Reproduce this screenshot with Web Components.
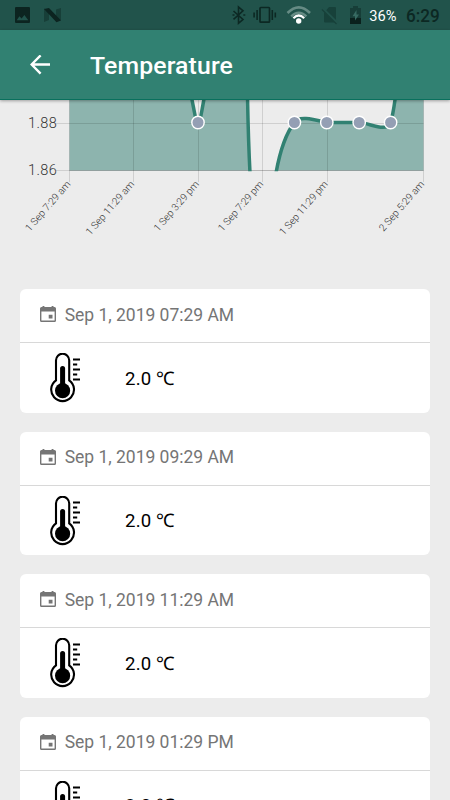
<!DOCTYPE html>
<html lang="en">
<head>
<meta charset="utf-8">
<title>Temperature</title>
<style>
html,body{margin:0;height:800px;overflow:hidden;background:#ececec;font-family:Roboto,"Liberation Sans",sans-serif}
</style>
</head>
<body>
<temperature-screen></temperature-screen>
<script>
function define(name, markup) {
  const template = document.createElement('template');
  template.innerHTML = markup;
  customElements.define(name, class extends HTMLElement {
    constructor() {
      super();
      this.attachShadow({mode: 'open'}).append(template.content.cloneNode(true));
    }
  });
}

define('status-bar', `
<style>
:host{display:flex;height:30px;background:#21534b;color:#0c2823}
svg{display:block;width:450px;height:30px}
</style>
<svg viewBox="0 0 450 30">
  <path fill="#0c2420" fill-rule="evenodd" d="M16 7H29Q30 7 30 8V22Q30 23 29 23H16Q15 23 15 22V8Q15 7 16 7ZM16.7 20.3H28.3L24.4 15 21.6 18.6 19.4 16.3Z"/>
  <path fill="#173f38" d="M44 8.5 49 11V20L44 22ZM56 9.5 61 8V20.5L56 18Z"/>
  <path fill="#0c2420" d="M44 9 49 8 61 20.5 56.5 22.3Z"/>
  <path d="M233.5 11 243 19.5 238.5 23.2V7L243 10.8 233.5 19.3" fill="none" stroke="#0c2823" stroke-width="1.6"/>
  <path d="M232.5 15h2M243.3 15h2" stroke="#0c2823" stroke-width="1.5"/>
  <rect x="260" y="7.5" width="9.5" height="14.7" rx=".8" fill="none" stroke="#0c2823" stroke-width="1.7"/>
  <path d="M257.1 10v10M254.1 12.5v5M272.3 10v10M275.3 12.5v5" stroke="#0c2823" stroke-width="1.6"/>
  <g fill="none">
    <path d="M287.5 13Q298.8 1.8 310 13" stroke="#668b84" stroke-width="2.6"/>
    <path d="M291.2 16.4Q298.8 9.2 306.4 16.4" stroke="#668b84" stroke-width="2.4"/>
    <path d="M293.4 18.2Q298.8 12.8 304.2 18.2" stroke="#fff" stroke-width="2.2"/>
  </g>
  <circle cx="298.7" cy="21" r="2.7" fill="#fff"/>
  <path d="M324 13 329 7H335Q336 7 336 8V22.5H325Q324 22.5 324 21.5Z" fill="#17413a"/>
  <path d="M322.5 8.5 337.2 23" stroke="#21534b" stroke-width="2.7"/><path d="M322 9.5 336.5 24" stroke="#17413a" stroke-width="1.3"/>
  <path d="M350 8h3V6h5v2h3v11h-11Z" fill="#173e38"/><path d="M350 18h11v6h-11Z" fill="#0a211d"/>
  <path d="M356.5 10 352.5 16.3H355V20.5L359 14.5H356.5Z" fill="#376b62"/>
  <text x="369.3" y="21" font-size="15" fill="#fff" textLength="27.2" lengthAdjust="spacingAndGlyphs">36%</text>
  <text x="406" y="21.6" font-size="18" font-weight="500" fill="#0c2823" textLength="33.7" lengthAdjust="spacingAndGlyphs">6:29</text>
</svg>`);

define('app-bar', `
<style>
:host{display:flex;align-items:center;box-sizing:border-box;height:70px;padding-left:30px;gap:40px;background:#318172;border-bottom:1px solid #09705d;box-shadow:0 1px 3px #0005;position:relative;z-index:1;color:#fff}
svg{width:20px;height:20px;flex:none}
h1{margin:2px 0 0;font-size:24.8px;line-height:32px;font-weight:500;letter-spacing:.12px}
</style>
<svg viewBox="0 0 20 20" fill="none" stroke="#fff" stroke-width="2.4"><path d="M20 9.5H2M10.6 .4 1.6 9.5l9 9.1"/></svg>
<h1><slot></slot></h1>`);

define('temperature-chart', `
<style>
:host{display:block;height:189.2px}
svg{display:block;width:450px;height:189px}
</style>
<svg viewBox="0 100 450 189">
  <defs><clipPath id="plot"><rect x="68" y="100" width="357" height="71.3"/></clipPath></defs>
  <g clip-path="url(#plot)">
    <path fill="#8db4ae" d="M69.5 96H191.5C194 109 196 123 198 123S202 110 204.5 96H247.5Q248.5 140 250 170.5H69.5Z"/>
    <path fill="#8db4ae" d="M276 170.5C280 151 287 132 294.3 122.6C299 115 314 119.5 326.8 122.6H359.3C370 123 386 133 390.5 122.6C393 115 394 108 395.5 96H423.5V170.5Z"/>
  </g>
  <g stroke="#000" stroke-opacity=".12" stroke-width="1">
    <path d="M56 123.5H423.5M56 170.5H423.5M69.5 100V182M133.5 100V182M198.5 100V182M262.5 100V182M327.5 100V182M423.5 100V182"/>
    <path d="M69.5 170.5H423.5"/>
  </g>
  <g clip-path="url(#plot)" fill="none" stroke="#318172" stroke-width="3.5">
    <path d="M191.2 96C194 109 196 123 198 123S202 110 204.5 96M247.5 96Q248.3 140 250 173M276 173C280 151 287 132 294.3 122.6C299 115 314 119.5 326.8 122.6H359.3C370 123 386 133 390.5 122.6C393 115 394 108 395.5 96"/>
  </g>
  <g fill="#949fb4" stroke="#fff" stroke-width="1.4">
    <circle cx="198" cy="122.5" r="6.2"/><circle cx="294.4" cy="122.5" r="6.2"/><circle cx="326.8" cy="122.5" r="6.2"/><circle cx="359.2" cy="122.5" r="6.2"/><circle cx="390.6" cy="122.5" r="6.2"/>
  </g>
  <g fill="#333" font-size="14.5" font-weight="300">
    <text x="28" y="127.7" textLength="28.7">1.88</text><text x="28" y="175.4" textLength="28.7">1.86</text>
  </g>
  <g fill="#333" font-size="10" font-weight="300" text-anchor="end">
    <text transform="translate(71 184.5) rotate(-49)" textLength="63">1 Sep 7:29 am</text>
    <text transform="translate(134.8 184.5) rotate(-49)" textLength="68">1 Sep 11:29 am</text>
    <text transform="translate(199.5 184.5) rotate(-49)" textLength="63">1 Sep 3:29 pm</text>
    <text transform="translate(263.8 184.5) rotate(-49)" textLength="63">1 Sep 7:29 pm</text>
    <text transform="translate(328.4 184.5) rotate(-49)" textLength="68">1 Sep 11:29 pm</text>
    <text transform="translate(424.8 184.5) rotate(-49)" textLength="63">2 Sep 5:29 am</text>
  </g>
</svg>`);

define('calendar-icon', `
<style>:host{display:block;width:16px;height:16px}svg{display:block}</style>
<svg width="16" height="16" viewBox="0 0 16 16"><path fill="#757575" fill-rule="evenodd" d="M2.5 0H4.4V1H11.6V0H13.5V1H14.5Q16 1 16 2.5V14.5Q16 16 14.5 16H1.5Q0 16 0 14.5V2.5Q0 1 1.5 1H2.5ZM1.4 5.4V14.6H14.6V5.4ZM8.7 8.8H12.5V12.6H8.7Z"/></svg>`);

define('thermometer-icon', `
<style>:host{display:block;width:31px;height:51px}svg{display:block}</style>
<svg width="31" height="51" viewBox="0 0 31 51">
  <path d="M6 27.4V7.3A6.6 6.6 0 0 1 19.2 7.3V27.4A11.4 11.4 0 1 1 6 27.4Z" fill="none" stroke="#000" stroke-width="2.1"/>
  <circle cx="12.6" cy="37.7" r="7.6"/><path d="M12.6 38V15.6" stroke="#000" stroke-width="5" stroke-linecap="round"/>
  <path d="M23 6.5H30M23 11.5H27.2M23 16.5H30M23 21.5H27.2M23 26.5H30" stroke="#000" stroke-width="2"/>
</svg>`);

define('reading-card', `
<style>
:host{display:flex;flex-direction:column;flex:none;height:123.5px;border-radius:6px;background:#fff;overflow:hidden}
header{display:flex;align-items:center;gap:9.2px;box-sizing:border-box;height:54px;padding:0 0 3px 19.5px;border-bottom:1.5px solid #d8d8d8;color:#757575;font-size:17.5px;letter-spacing:-.02px}
header span{line-height:24px;white-space:nowrap;margin-top:1px}
.body{display:flex;align-items:center;flex:1;padding:1.6px 0 0 30px;gap:44px;font-size:18.6px;color:#000}
.value{line-height:22px;white-space:nowrap;letter-spacing:.2px}
</style>
<header><calendar-icon></calendar-icon><span><slot name="date"></slot></span></header>
<div class="body"><thermometer-icon></thermometer-icon><span class="value"><slot></slot></span></div>`);

define('temperature-screen', `
<style>
:host{display:block;width:450px;height:800px;overflow:hidden;background:#ececec}
main{display:flex;flex-direction:column;gap:19px;padding:0 20px}
</style>
<status-bar></status-bar>
<app-bar>Temperature</app-bar>
<temperature-chart></temperature-chart>
<main>
  <reading-card><span slot="date">Sep 1, 2019 07:29 AM</span>2.0 ℃</reading-card>
  <reading-card><span slot="date">Sep 1, 2019 09:29 AM</span>2.0 ℃</reading-card>
  <reading-card><span slot="date">Sep 1, 2019 11:29 AM</span>2.0 ℃</reading-card>
  <reading-card><span slot="date">Sep 1, 2019 01:29 PM</span>2.0 ℃</reading-card>
</main>`);
</script>
</body>
</html>
